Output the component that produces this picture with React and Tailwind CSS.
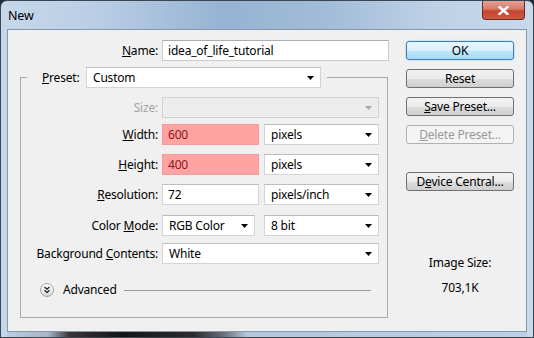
import React from "react";

function Arrow({ disabled }) {
  return (
    <svg width="7" height="4" viewBox="0 0 7 4" className="shrink-0">
      <polygon points="0,0 7,0 3.5,4" fill={disabled ? "#a8a8a8" : "#000"} />
    </svg>
  );
}

function Select({ className, text, disabled }) {
  return (
    <div
      className={
        "h-[21px] flex items-center justify-between pl-[6px] pr-[6px] border " +
        (disabled
          ? "bg-[#ececec] border-[#d2d2d2] "
          : "bg-white border-[#d4d4d4] border-t-[#bcbcbc] ") +
        className
      }
    >
      <span className="leading-[16px] whitespace-nowrap">{text}</span>
      <Arrow disabled={disabled} />
    </div>
  );
}

function Label({ children, gray }) {
  return (
    <div
      className={
        "w-[137px] shrink-0 text-right leading-[16px] whitespace-nowrap " +
        (gray ? "text-[#a3a3a3]" : "text-black")
      }
    >
      {children}
    </div>
  );
}

function Btn({ children, primary, disabled, className }) {
  let cls =
    "w-[108px] h-[19px] rounded-[3px] border flex items-center justify-center leading-[16px] ";
  if (primary)
    cls +=
      "border-[#3c7fb1] bg-[linear-gradient(to_bottom,#eaf6fd_0%,#d9f0fc_50%,#bee6fd_51%,#a7d9f5_100%)] shadow-[0_0_2px_#7ec4ea] text-black ";
  else if (disabled)
    cls += "border-[#adb2b5] bg-[#f4f4f4] text-[#9a9a9a] ";
  else
    cls +=
      "border-[#707070] bg-[linear-gradient(to_bottom,#f2f2f2_0%,#ebebeb_50%,#dddddd_51%,#cfcfcf_100%)] text-black ";
  return <div className={cls + (className || "")}>{children}</div>;
}

export default function App() {
  return (
    <div className="w-[534px] h-[338px] overflow-hidden bg-[#1e2a36] font-['Noto_Sans',sans-serif] text-[12px] tracking-[-0.2px] text-black">
      <div className="w-full h-full flex flex-col rounded-t-[7px] border border-[#3a4654] bg-[linear-gradient(to_right,#c6d7ea_0%,#b9cee5_18%,#96b3d2_42%,#a3bdd8_62%,#bcd0e6_80%,#c8d9ec_100%)]">
        {/* title bar */}
        <div className="h-[28px] flex items-start justify-between shrink-0">
          <div className="pl-[7px] pt-[7px] text-[12.5px] leading-[16px] text-black">New</div>
          <div className="mr-[8px] w-[43px] h-[19px] rounded-b-[4px] border border-t-0 border-[#6b2a22] bg-[linear-gradient(to_bottom,#e4a192_0%,#d77a66_45%,#c4432f_55%,#cf5a3f_100%)] flex items-center justify-center">
            <svg width="11" height="9" viewBox="0 0 11 9">
              <path d="M1.5 1 L9.5 8 M9.5 1 L1.5 8" stroke="#fff" strokeWidth="2.4" strokeLinecap="square" />
            </svg>
          </div>
        </div>
        {/* client */}
        <div className="flex-1 ml-[6px] mr-[6px] border border-[#8497ad] bg-[#f0f0f0] flex">
          {/* left part */}
          <div className="w-[382px] shrink-0 pt-[10px] flex flex-col">
            <div className="flex items-center h-[21px]">
              <div className="w-[150px] text-right leading-[16px]">
                <u>N</u>ame:
              </div>
              <div className="ml-[4px] w-[227px] h-[21px] bg-white border border-[#c8cbd2] border-t-[#abadb3] flex items-center pl-[5px] leading-[16px]">
                idea_of_life_tutorial
              </div>
            </div>
            <fieldset className="mt-[6px] ml-[12px] w-[368px] h-[251px] border border-[#a9a9a9] p-0 m-0 min-w-0">
              <legend className="ml-[6px] p-0">
                <div className="flex items-center pr-[6px]">
                  <div className="w-[59px] pl-[15px] leading-[16px]">
                    <u>P</u>reset:
                  </div>
                  <Select className="w-[235px]" text="Custom" />
                </div>
              </legend>
              <div className="flex flex-col">
                <div className="flex items-center mt-[9px]">
                  <Label gray>Size:</Label>
                  <Select className="ml-[4px] w-[217px]" text="" disabled />
                </div>
                <div className="flex items-center mt-[6px]">
                  <Label>
                    <u>W</u>idth:
                  </Label>
                  <div className="ml-[4px] w-[97px] h-[21px] bg-[#ffa3a3] border border-[#f39a9a] flex items-center pl-[5px] text-[#8e1414] leading-[16px]">
                    600
                  </div>
                  <Select className="ml-[5px] w-[115px]" text="pixels" />
                </div>
                <div className="flex items-center mt-[9px]">
                  <Label>
                    <u>H</u>eight:
                  </Label>
                  <div className="ml-[4px] w-[97px] h-[21px] bg-[#ffa3a3] border border-[#f39a9a] flex items-center pl-[5px] text-[#8e1414] leading-[16px]">
                    400
                  </div>
                  <Select className="ml-[5px] w-[115px]" text="pixels" />
                </div>
                <div className="flex items-center mt-[9px]">
                  <Label>
                    <u>R</u>esolution:
                  </Label>
                  <div className="ml-[4px] w-[97px] h-[21px] bg-white border border-[#d4d4d4] border-t-[#bcbcbc] flex items-center pl-[5px] leading-[16px]">
                    72
                  </div>
                  <Select className="ml-[5px] w-[115px]" text="pixels/inch" />
                </div>
                <div className="flex items-center mt-[10px]">
                  <Label>
                    Color <u>M</u>ode:
                  </Label>
                  <Select className="ml-[4px] w-[93px]" text="RGB Color" />
                  <Select className="ml-[9px] w-[115px]" text="8 bit" />
                </div>
                <div className="flex items-center mt-[7px]">
                  <Label>
                    Background <u>C</u>ontents:
                  </Label>
                  <Select className="ml-[4px] w-[217px]" text="White" />
                </div>
                <div className="flex items-center h-[14px] mt-[19px] pl-[19px] pr-[16px]">
                  <div className="w-[14px] h-[14px] rounded-full border border-[#a4a4a4] bg-[linear-gradient(to_bottom,#ffffff_0%,#ededed_50%,#d6d6d6_100%)] flex items-center justify-center shrink-0">
                    <svg width="8" height="8" viewBox="0 0 8 8">
                      <path d="M1.5 1 L4 3.2 L6.5 1 M1.5 4.3 L4 6.5 L6.5 4.3" fill="none" stroke="#222" strokeWidth="1.3" />
                    </svg>
                  </div>
                  <div className="ml-[9px] leading-[16px]">Advanced</div>
                  <div className="ml-[7px] flex-1 h-px bg-[#9c9c9c]" />
                </div>
              </div>
            </fieldset>
          </div>
          {/* right part */}
          <div className="ml-[16px] w-[108px] pt-[11px] flex flex-col items-center">
            <Btn primary>OK</Btn>
            <Btn className="mt-[9px]">Reset</Btn>
            <Btn className="mt-[9px]">
              <span>
                <u>S</u>ave Preset...
              </span>
            </Btn>
            <Btn disabled className="mt-[9px]">
              <span>
                <u>D</u>elete Preset...
              </span>
            </Btn>
            <Btn className="mt-[28px]">
              <span>
                D<u>e</u>vice Central...
              </span>
            </Btn>
            <div className="mt-[64px] leading-[16px] text-center">Image Size:</div>
            <div className="mt-[9px] leading-[16px] text-center">703,1K</div>
          </div>
        </div>
        {/* bottom frame */}
        <div className="h-[5px] shrink-0 ml-[6px] mr-[6px] bg-[linear-gradient(to_right,#b8cce3_0%,#a7b5c4_8%,#3c3434_12%,#151515_22%,#2d2a2a_36%,#6d7480_42%,#b3c6dc_46%,#bdd0e6_100%)]" />
      </div>
    </div>
  );
}
